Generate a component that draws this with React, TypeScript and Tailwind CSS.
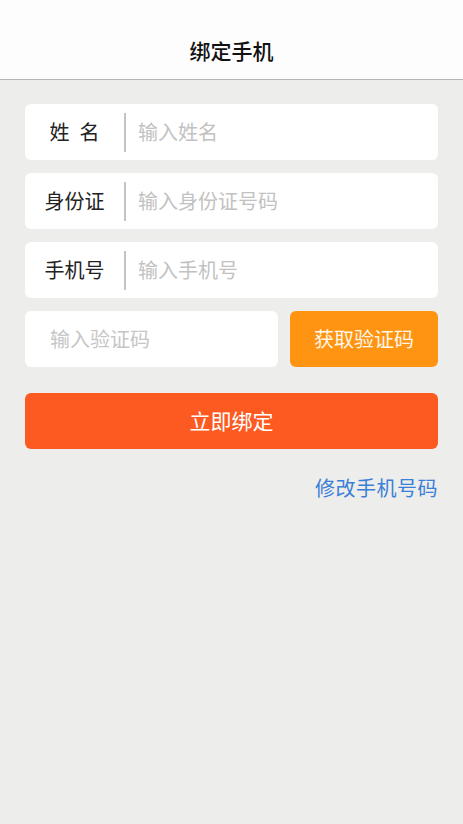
import React from "react";

const font = { fontFamily: '"Noto Sans CJK SC", "Noto Sans", sans-serif' };

function Row({ label, placeholder }: { label: React.ReactNode; placeholder: string }) {
  return (
    <div className="flex h-[56px] items-center rounded-[6px] bg-white">
      <div className="flex w-[99px] justify-center text-[20px] text-[#222]">{label}</div>
      <div className="h-[39px] w-[2px] bg-[#c4c4c4]" />
      <div className="pl-[12px] text-[20px] text-[#c2c2c2]">{placeholder}</div>
    </div>
  );
}

export default function App() {
  return (
    <div className="min-h-[824px] w-full bg-[#ededeb]" style={font}>
      <div className="flex h-[80px] items-end justify-center border-b border-[#b5b5b5] bg-[#fdfdfd] pb-[13px]">
        <span className="text-[21px] font-medium text-[#111]">绑定手机</span>
      </div>
      <div className="flex flex-col px-[25px] pt-[24px]">
        <div className="flex flex-col gap-[13px]">
          <Row
            label={
              <span className="flex gap-[10px]">
                <span>姓</span>
                <span>名</span>
              </span>
            }
            placeholder="输入姓名"
          />
          <Row label="身份证" placeholder="输入身份证号码" />
          <Row label="手机号" placeholder="输入手机号" />
          <div className="flex gap-[12px]">
            <div className="flex h-[56px] flex-1 items-center rounded-[6px] bg-white pl-[25px] text-[20px] text-[#c6c6c6]">
              输入验证码
            </div>
            <div className="flex h-[56px] w-[148px] items-center justify-center rounded-[6px] bg-[#ff9412] text-[20px] text-[#fff6e8]">
              获取验证码
            </div>
          </div>
        </div>
        <div className="mt-[26px] flex h-[56px] items-center justify-center rounded-[6px] bg-[#fd5a22] text-[21px] text-white">
          立即绑定
        </div>
        <div className="mt-[24px] flex justify-end">
          <span className="text-[20px] tracking-[0.5px] text-[#3a7fd8]">修改手机号码</span>
        </div>
      </div>
    </div>
  );
}
